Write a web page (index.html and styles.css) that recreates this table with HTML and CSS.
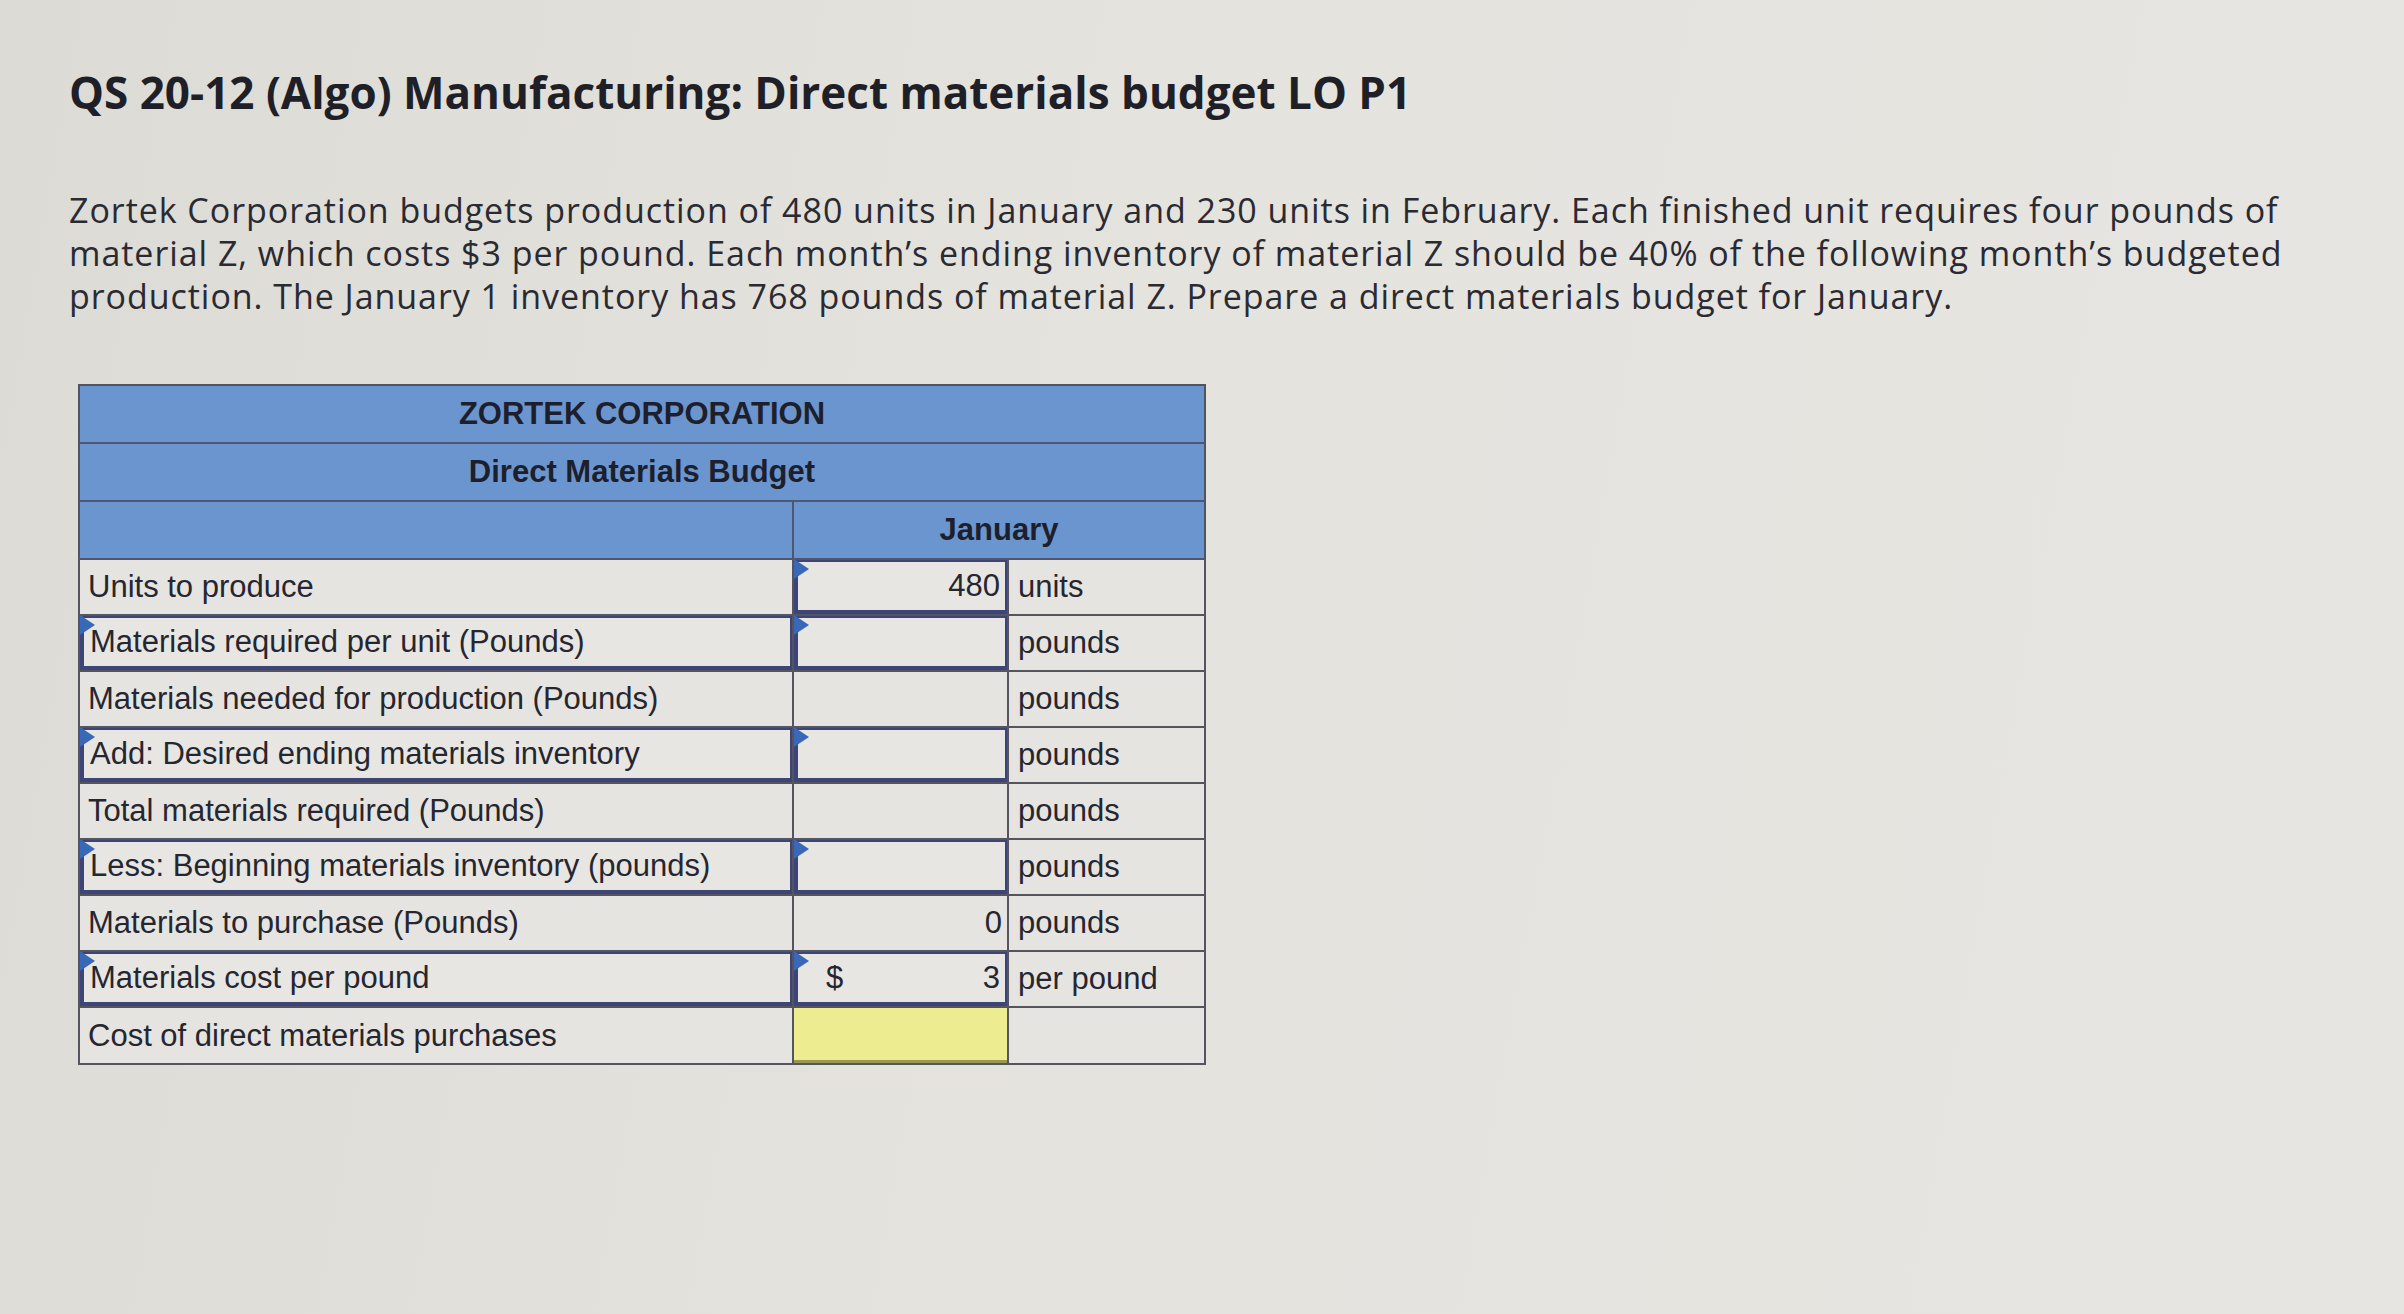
FILE: index.html
```html
<!DOCTYPE html>
<html lang="en">
<head>
    <meta charset="UTF-8">
    <title>QS 20-12 Direct materials budget</title>
    <link rel="stylesheet" href="styles.css">
</head>
<body>
    <div class="page">
        <h1>QS 20-12 (Algo) Manufacturing: Direct materials budget LO P1</h1>
        <p class="question">
            Zortek Corporation budgets production of 480 units in January and 230 units in February. Each finished unit requires four pounds of<br>
            material Z, which costs $3 per pound. Each month’s ending inventory of material Z should be 40% of the following month’s budgeted<br>
            production. The January 1 inventory has 768 pounds of material Z. Prepare a direct materials budget for January.
        </p>

        <table class="budget">
            <colgroup>
                <col class="c-label">
                <col class="c-value">
                <col class="c-unit">
            </colgroup>
            <tr class="head"><th colspan="3">ZORTEK CORPORATION</th></tr>
            <tr class="head"><th colspan="3">Direct Materials Budget</th></tr>
            <tr class="head"><th></th><th colspan="2" class="month">January</th></tr>

            <tr>
                <td class="label">Units to produce</td>
                <td class="value"><div class="field marked num">480</div></td>
                <td class="unit">units</td>
            </tr>
            <tr>
                <td class="label"><div class="field marked">Materials required per unit (Pounds)</div></td>
                <td class="value"><div class="field marked num"></div></td>
                <td class="unit">pounds</td>
            </tr>
            <tr>
                <td class="label">Materials needed for production (Pounds)</td>
                <td class="value"><div class="plain num"></div></td>
                <td class="unit">pounds</td>
            </tr>
            <tr>
                <td class="label"><div class="field marked">Add: Desired ending materials inventory</div></td>
                <td class="value"><div class="field marked num"></div></td>
                <td class="unit">pounds</td>
            </tr>
            <tr>
                <td class="label">Total materials required (Pounds)</td>
                <td class="value"><div class="plain num"></div></td>
                <td class="unit">pounds</td>
            </tr>
            <tr>
                <td class="label"><div class="field marked">Less: Beginning materials inventory (pounds)</div></td>
                <td class="value"><div class="field marked num"></div></td>
                <td class="unit">pounds</td>
            </tr>
            <tr>
                <td class="label">Materials to purchase (Pounds)</td>
                <td class="value"><div class="plain num">0</div></td>
                <td class="unit">pounds</td>
            </tr>
            <tr>
                <td class="label"><div class="field marked">Materials cost per pound</div></td>
                <td class="value"><div class="field marked num"><span class="cur">$</span>3</div></td>
                <td class="unit">per pound</td>
            </tr>
            <tr>
                <td class="label">Cost of direct materials purchases</td>
                <td class="value"><div class="answer"></div></td>
                <td class="unit"></td>
            </tr>
        </table>
    </div>
</body>
</html>
```

FILE: styles.css
```css
body {
    margin: 0;
    background: linear-gradient(100deg, #dcdbd5 0%, #e4e3de 45%, #e6e5e1 100%);
    color: #25252d;
    min-height: 1314px;
}
.page {
    padding: 60px 0 0 69px;
}
h1 {
    font-family: "Open Sans", sans-serif;
    font-weight: 700;
    font-size: 44px;
    letter-spacing: 0;
    margin: 0 0 62px;
    line-height: 64px;
    color: #1f1f28;
}
.question {
    font-family: "Open Sans", sans-serif;
    font-size: 34px;
    letter-spacing: 0.95px;
    line-height: 43px;
    margin: 0 0 66px;
    padding-top: 3px;
    color: #2a2a32;
    white-space: nowrap;
}
.budget {
    margin-left: 9px;
    border-collapse: collapse;
    border: 2px solid #53535f;
    font-family: "Liberation Sans", Arial, sans-serif;
    font-size: 31px;
    table-layout: fixed;
    width: 1126px;
}
.c-label { width: 714px; }
.c-value { width: 215px; }
.c-unit { width: 197px; }
.head th {
    background: #6b95cf;
    height: 56px;
    padding: 0;
    font-weight: 700;
    color: #1d1f2c;
    border-bottom: 2px solid #4e5670;
}
.head th.month {
    border-left: 2px solid #4e5670;
}
.budget td {
    height: 54px;
    padding: 0;
    background: #e5e4e0;
    border: 2px solid #55555f;
    color: #262630;
}
.budget td.label {
    padding: 0 0 0 8px;
}
.budget td.label .field {
    margin-left: -8px;
    padding-left: 6px;
}
.budget td.unit {
    padding-left: 9px;
}
.field {
    position: relative;
    height: 48px;
    line-height: 48px;
    border: 2px solid #3d4478;
    border-left-width: 4px;
    border-bottom-width: 4px;
    background: #e7e6e2;
}
.marked::before {
    content: "";
    position: absolute;
    left: -4px;
    top: -3px;
    border-top: 10px solid transparent;
    border-bottom: 10px solid transparent;
    border-left: 15px solid #3a68b8;
}
.plain {
    height: 54px;
    line-height: 54px;
}
.num {
    padding-right: 5px;
    display: flex;
    justify-content: flex-end;
}
.cur {
    margin-right: auto;
    padding-left: 28px;
}
.answer {
    height: 52px;
    background: #eeec90;
    border-bottom: 3px solid #9a9752;
}
```
